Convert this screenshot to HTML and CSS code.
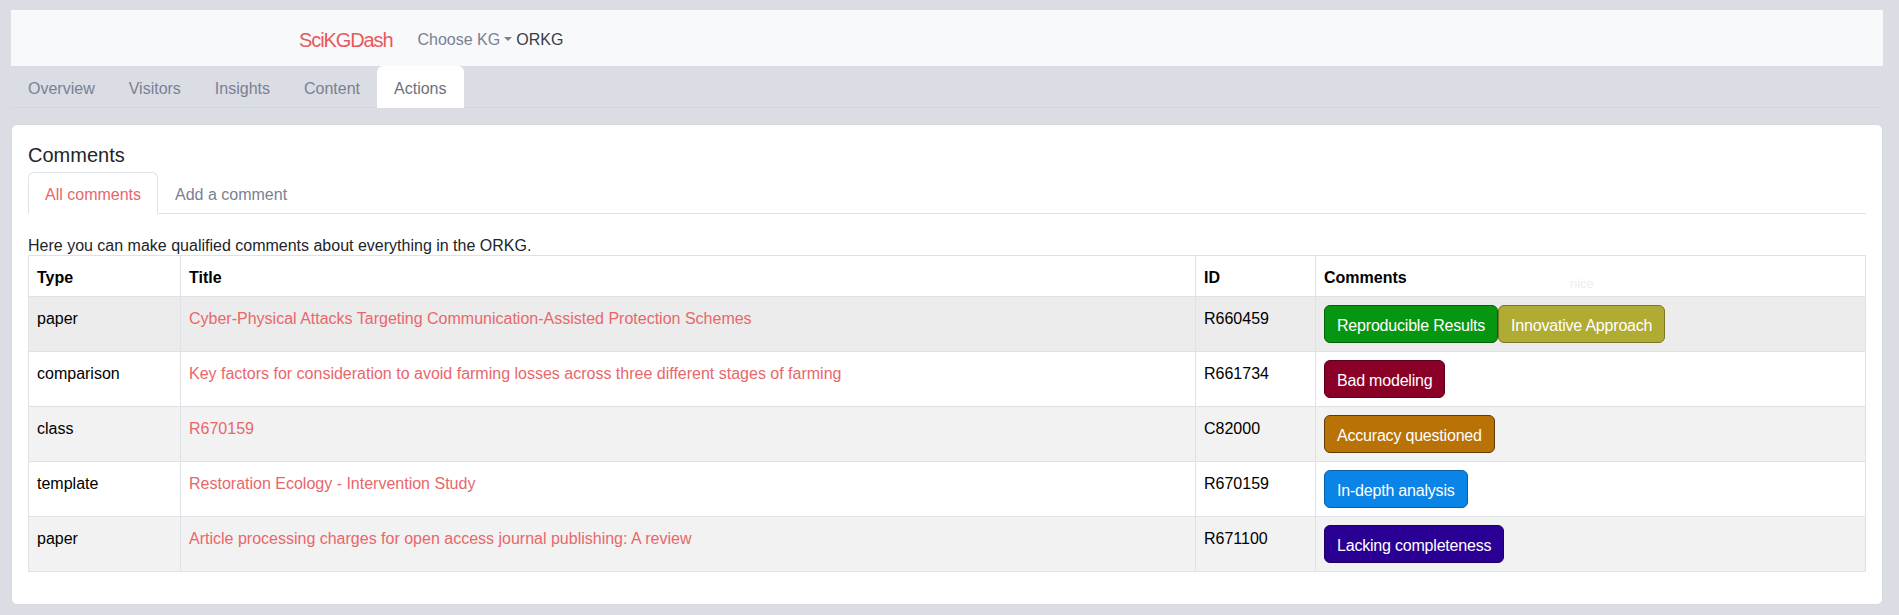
FILE: index.html
```html
<!DOCTYPE html>
<html lang="en">
<head>
<meta charset="utf-8">
<title>SciKGDash</title>
<link rel="stylesheet" href="styles.css">
</head>
<body>
<div class="page">
  <nav class="navbar">
    <a class="brand" href="#">SciKGDash</a>
    <span class="kg-choose">Choose KG<span class="caret"></span></span>
    <span class="kg-current">ORKG</span>
  </nav>
  <ul class="main-tabs">
    <li class="main-tab">Overview</li>
    <li class="main-tab">Visitors</li>
    <li class="main-tab">Insights</li>
    <li class="main-tab">Content</li>
    <li class="main-tab active">Actions</li>
  </ul>
  <section class="card">
    <h5 class="card-title">Comments</h5>
    <ul class="sub-tabs">
      <li class="sub-tab active">All comments</li>
      <li class="sub-tab">Add a comment</li>
    </ul>
    <div class="tab-pane">
      <p class="intro">Here you can make qualified comments about everything in the ORKG.</p>
      <table class="comments-table">
        <colgroup>
          <col class="col-type">
          <col class="col-title">
          <col class="col-id">
          <col class="col-comments">
        </colgroup>
        <thead>
          <tr>
            <th>Type</th>
            <th>Title</th>
            <th>ID</th>
            <th class="th-comments">Comments<span class="tooltip">nice</span></th>
          </tr>
        </thead>
        <tbody>
          <tr class="row-hover">
            <td>paper</td>
            <td><a class="title-link" href="#">Cyber-Physical Attacks Targeting Communication-Assisted Protection Schemes</a></td>
            <td>R660459</td>
            <td class="td-comments"><div class="btns"><span class="btn btn-green">Reproducible Results</span><span class="btn btn-olive">Innovative Approach</span></div></td>
          </tr>
          <tr>
            <td>comparison</td>
            <td><a class="title-link" href="#">Key factors for consideration to avoid farming losses across three different stages of farming</a></td>
            <td>R661734</td>
            <td class="td-comments"><div class="btns"><span class="btn btn-maroon">Bad modeling</span></div></td>
          </tr>
          <tr class="row-striped">
            <td>class</td>
            <td><a class="title-link" href="#">R670159</a></td>
            <td>C82000</td>
            <td class="td-comments"><div class="btns"><span class="btn btn-orange">Accuracy questioned</span></div></td>
          </tr>
          <tr>
            <td>template</td>
            <td><a class="title-link" href="#">Restoration Ecology - Intervention Study</a></td>
            <td>R670159</td>
            <td class="td-comments"><div class="btns"><span class="btn btn-blue">In-depth analysis</span></div></td>
          </tr>
          <tr class="row-striped">
            <td>paper</td>
            <td><a class="title-link" href="#">Article processing charges for open access journal publishing: A review</a></td>
            <td>R671100</td>
            <td class="td-comments"><div class="btns"><span class="btn btn-purple">Lacking completeness</span></div></td>
          </tr>
        </tbody>
      </table>
    </div>
  </section>
</div>
</body>
</html>
```

FILE: styles.css
```css
* { box-sizing: border-box; }

html, body {
  margin: 0;
  padding: 0;
  background: #dadde3;
  font-family: "Segoe UI", "Liberation Sans", Arial, sans-serif;
  font-size: 16px;
  line-height: 24px;
  color: #212529;
}

.page {
  padding: 10px 16px 12px 11px;
}

.navbar {
  display: flex;
  align-items: center;
  height: 56px;
  background: #f8f9fa;
  padding-left: 288px;
  padding-top: 4px;
}

.brand {
  font-size: 20px;
  line-height: 30px;
  letter-spacing: -1.1px;
  color: #e8585c;
  text-decoration: none;
  margin-right: 25px;
}

.kg-choose {
  color: #7b8094;
  display: inline-flex;
  align-items: center;
}

.caret {
  display: inline-block;
  margin-left: 4px;
  border-top: 4px solid #7b8094;
  border-left: 4px solid transparent;
  border-right: 4px solid transparent;
  margin-top: -2px;
}

.kg-current {
  color: #3a3d45;
  margin-left: 4px;
}

.main-tabs {
  list-style: none;
  margin: 0;
  padding: 0;
  display: flex;
  border-bottom: 1px solid #d3d6dc;
}

.main-tab {
  padding: 10px 16px 6px;
  border: 1px solid transparent;
  border-top-left-radius: 6px;
  border-top-right-radius: 6px;
  margin-bottom: -1px;
  color: #7b8094;
}

.main-tab.active {
  background: #ffffff;
  color: #6c707d;
}

.card {
  margin-top: 16px;
  background: #ffffff;
  border: 1px solid #d6d9de;
  border-radius: 6px;
  padding: 16px;
}

.card-title {
  margin: 0 0 5px 0;
  padding-top: 2px;
  font-size: 20px;
  font-weight: 400;
  line-height: 24px;
  color: #212529;
}

.sub-tabs {
  list-style: none;
  margin: 0;
  padding: 0;
  display: flex;
  border-bottom: 1px solid #dee2e6;
}

.sub-tab {
  padding: 10px 16px 6px;
  border: 1px solid transparent;
  border-top-left-radius: 6px;
  border-top-right-radius: 6px;
  margin-bottom: -1px;
  color: #7b8094;
}

.sub-tab.active {
  border-color: #dee2e6 #dee2e6 #ffffff;
  color: #e8676b;
  background: #ffffff;
}

.tab-pane {
  padding-top: 18px;
}

.intro {
  margin: 0 0 -3px 0;
  padding-top: 2px;
  color: #212529;
}

.comments-table {
  width: 100%;
  border-collapse: collapse;
  border: 1px solid #dee2e6;
  color: #000000;
  margin-bottom: 16px;
}

.col-type { width: 152px; }
.col-id { width: 120px; }
.col-comments { width: 550px; }

.comments-table th,
.comments-table td {
  text-align: left;
  vertical-align: top;
  padding: 10px 8px 6px;
  border: 1px solid #dee2e6;
}

.comments-table td.td-comments {
  padding: 8px;
}

.comments-table th {
  font-weight: 700;
}

.th-comments {
  position: relative;
}

.tooltip {
  position: absolute;
  left: 254px;
  top: 20px;
  font-size: 13px;
  font-weight: 400;
  line-height: 16px;
  color: #eeeeee;
}

.row-hover td { background: #ececec; }
.row-striped td { background: #f2f2f2; }

.title-link {
  color: #e8676b;
  text-decoration: none;
}

.btns {
  display: flex;
}

.btn {
  display: inline-block;
  padding: 8px 12px 4px;
  border: 1px solid;
  border-radius: 6px;
  color: #ffffff;
  line-height: 24px;
  letter-spacing: -0.2px;
  white-space: nowrap;
}

.btn-green { background: #07960f; border-color: #05620a; }
.btn-olive { background: #b0ab33; border-color: #7a7624; }
.btn-maroon { background: #8a0027; border-color: #5c001a; }
.btn-orange { background: #b87205; border-color: #5e3a05; }
.btn-blue { background: #0a84e6; border-color: #0a5ea6; }
.btn-purple { background: #2a0094; border-color: #1c0066; }
```
